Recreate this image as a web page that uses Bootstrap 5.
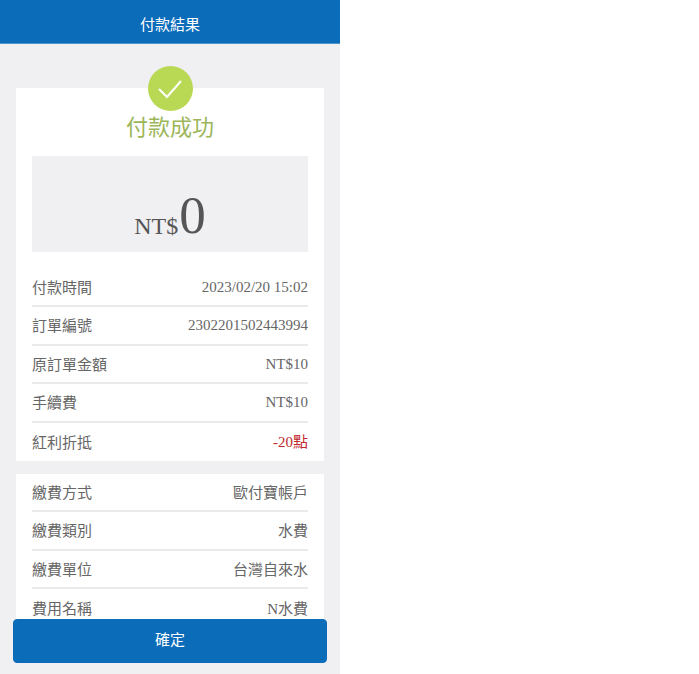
<!DOCTYPE html>
<html lang="zh-Hant">

<head>
  <meta charset="UTF-8" />
  <meta name="viewport" content="width=device-width,initial-scale=1.0" />
  <title>付款結果</title>
  <link href="https://cdn.jsdelivr.net/npm/bootstrap@5.3.0/dist/css/bootstrap.min.css" rel="stylesheet" />
  <style>
    body { background: #fff; font-family: "Liberation Serif", "Noto Sans CJK TC", serif; }
    .pay-screen { width: 340px; height: 674px; background: #f0eff2; overflow: hidden; position: relative; }
    .pay-header { height: 44px; background: #0b6cb9; border-bottom: 1px solid #4b95cf; color: #fff; font-size: 15px; font-family: "Noto Sans CJK TC", sans-serif; padding-top: 5px; }
    .pay-body { padding: 44px 16px 0; }
    .pay-panel { background: #fff; padding: 0 16px; display: flow-root; }
    .pay-panel + .pay-panel { margin-top: 13px; }
    .pay-tick { width: 45px; height: 45px; border-radius: 50%; background: #b9d955; margin: -22px auto 0; }
    .pay-title { color: #9cb65a; font-size: 22px; line-height: 30px; font-family: "Noto Sans CJK TC", sans-serif; margin-top: -1px; }
    .pay-amount { height: 96px; margin-top: 16px; background: #f0eff2; color: #555; padding-bottom: 10px; }
    .pay-cur { font-size: 24px; line-height: 1; margin-bottom: 4px; }
    .pay-num { font-size: 53px; line-height: 1; margin-left: 1px; }
    .pay-rows { margin-top: 17px; }
    .pay-row { height: 38.4px; color: #666; font-size: 15px; border-bottom: 2px solid #ebebeb; }
    .pay-row:last-child { border-bottom: 0; }
    .pay-label { font-family: "Noto Sans CJK TC", sans-serif; }
    .pay-red { color: #c1272d; }
    .pay-confirm { position: absolute; left: 13px; top: 619px; width: 314px; height: 44px; background: #0b6cb9; border-color: #0b6cb9; border-radius: 4px; color: #fff; font-size: 15px; font-family: "Noto Sans CJK TC", sans-serif; padding-top: 4px; padding-bottom: 8px; }
  </style>
</head>

<body>
  <div class="pay-screen">
    <div class="pay-header d-flex align-items-center justify-content-center">付款結果</div>
    <div class="pay-body">
      <div class="pay-panel">
        <div class="pay-tick d-flex align-items-center justify-content-center">
          <svg width="26" height="20" viewBox="0 0 26 20" fill="none" stroke="#fff" stroke-width="2">
            <path d="M2 10 L10 18 L24 2" />
          </svg>
        </div>
        <div class="pay-title text-center">付款成功</div>
        <div class="pay-amount d-flex align-items-end justify-content-center">
          <span class="pay-cur">NT$</span><span class="pay-num">0</span>
        </div>
        <div class="pay-rows">
          <div class="pay-row d-flex align-items-center justify-content-between"><span class="pay-label">付款時間</span><span>2023/02/20 15:02</span></div>
          <div class="pay-row d-flex align-items-center justify-content-between"><span class="pay-label">訂單編號</span><span>2302201502443994</span></div>
          <div class="pay-row d-flex align-items-center justify-content-between"><span class="pay-label">原訂單金額</span><span>NT$10</span></div>
          <div class="pay-row d-flex align-items-center justify-content-between"><span class="pay-label">手續費</span><span>NT$10</span></div>
          <div class="pay-row d-flex align-items-center justify-content-between"><span class="pay-label">紅利折抵</span><span class="pay-red">-20點</span></div>
        </div>
      </div>
      <div class="pay-panel">
        <div class="pay-row d-flex align-items-center justify-content-between"><span class="pay-label">繳費方式</span><span class="pay-label">歐付寶帳戶</span></div>
        <div class="pay-row d-flex align-items-center justify-content-between"><span class="pay-label">繳費類別</span><span class="pay-label">水費</span></div>
        <div class="pay-row d-flex align-items-center justify-content-between"><span class="pay-label">繳費單位</span><span class="pay-label">台灣自來水</span></div>
        <div class="pay-row d-flex align-items-center justify-content-between"><span class="pay-label">費用名稱</span><span>N<span class="pay-label">水費</span></span></div>
      </div>
    </div>
    <button type="button" class="btn pay-confirm">確定</button>
  </div>
  <script src="https://cdn.jsdelivr.net/npm/bootstrap@5.3.0/dist/js/bootstrap.bundle.min.js"></script>
</body>

</html>
